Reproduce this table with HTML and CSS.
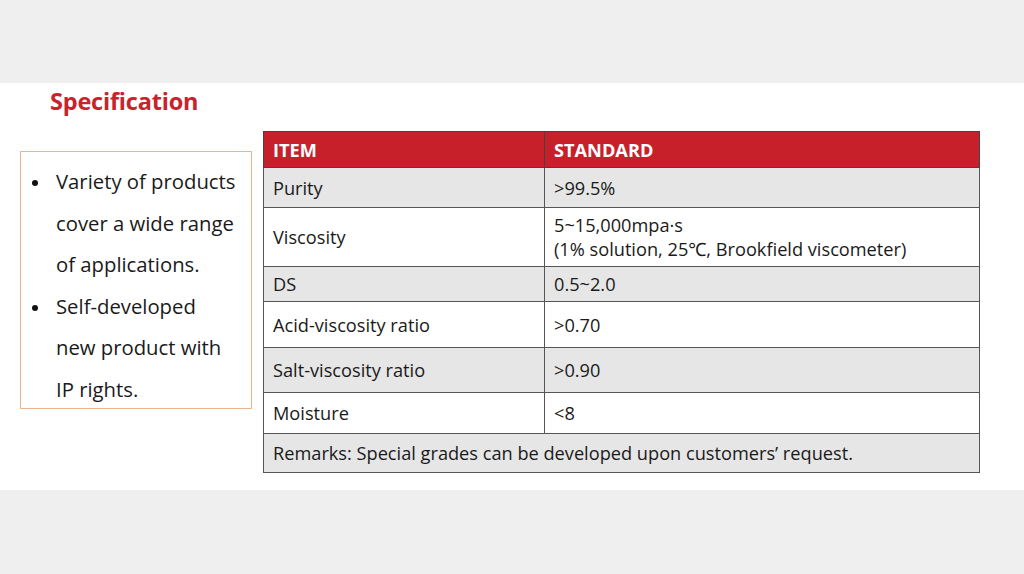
FILE: index.html
```html
<!DOCTYPE html>
<html>
<head>
<meta charset="utf-8">
<link rel="stylesheet" href="styles.css">
</head>
<body>
<div class="band"></div>
<main class="slide">
  <h1 class="title">Specification</h1>
  <div class="content">
    <div class="notes">
      <ul>
        <li>Variety of products<br>cover a wide range<br>of applications.</li>
        <li>Self-developed<br>new product with<br>IP rights.</li>
      </ul>
    </div>
    <table class="spec">
      <thead>
        <tr><th class="c1">ITEM</th><th>STANDARD</th></tr>
      </thead>
      <tbody>
        <tr class="g h40"><td>Purity</td><td>&gt;99.5%</td></tr>
        <tr class="w h59"><td>Viscosity</td><td>5~15,000mpa·s<br>(1% solution, 25℃, Brookfield viscometer)</td></tr>
        <tr class="g h35"><td>DS</td><td>0.5~2.0</td></tr>
        <tr class="w h46"><td>Acid-viscosity ratio</td><td>&gt;0.70</td></tr>
        <tr class="g h45"><td>Salt-viscosity ratio</td><td>&gt;0.90</td></tr>
        <tr class="w h41"><td>Moisture</td><td>&lt;8</td></tr>
        <tr class="g h39"><td colspan="2">Remarks: Special grades can be developed upon customers’ request.</td></tr>
      </tbody>
    </table>
  </div>
</main>
<div class="band bottom"></div>
</body>
</html>
```
FILE: styles.css
```css
html, body {
  margin: 0;
  padding: 0;
  background: #efefef;
}
body {
  width: 1024px;
  height: 574px;
  overflow: hidden;
  font-family: "Open Sans", "Noto Sans", sans-serif;
  color: #222;
}
.band {
  height: 83px;
  background: #efefef;
}
.band.bottom {
  height: 84px;
}
.slide {
  height: 407px;
  background: #fff;
}
.title {
  margin: 0;
  padding: 3px 0 0 50px;
  height: 42px;
  box-sizing: border-box;
  font-size: 23.5px;
  font-weight: 700;
  color: #c8232b;
  line-height: 30px;
  letter-spacing: -0.2px;
}
.content {
  display: flex;
  align-items: flex-start;
  padding-left: 20px;
}
.notes {
  margin-top: 26px;
  width: 232px;
  height: 258px;
  box-sizing: border-box;
  border: 1.5px solid #eeb48c;
  padding-top: 9px;
}
.notes ul {
  margin: 0;
  padding: 0 0 0 35px;
  list-style: none;
  white-space: nowrap;
}
.notes li {
  position: relative;
  font-size: 20.3px;
  line-height: 41.5px;
  color: #1a1a1a;
}
.notes li::before {
  content: "";
  position: absolute;
  left: -24px;
  top: 19px;
  width: 6px;
  height: 6px;
  border-radius: 50%;
  background: #111;
}
.spec {
  margin-left: 11px;
  margin-top: 6px;
  width: 717px;
  border-collapse: collapse;
  font-size: 18.2px;
  border: 1.5px solid #444;
}
.spec th {
  background: #c8202a;
  color: #fff;
  text-align: left;
  font-weight: 700;
  height: 34px;
  padding: 1px 9px 0;
  border-right: 1.5px solid #444;
  border-bottom: 1.5px solid #444;
}
.spec th.c1 {
  width: 262px;
}
.spec td {
  padding: 0 9px;
  border: 1.5px solid #555;
  line-height: 24px;
  color: #1a1a1a;
}
.spec tr.g td { background: #e6e6e6; }
.spec tr.w td { background: #fff; }
.h40 { height: 40px; }
.h59 { height: 59px; }
.h35 { height: 35px; }
.h46 { height: 46px; }
.h45 { height: 45px; }
.h41 { height: 41px; }
.h39 { height: 39px; }
```
